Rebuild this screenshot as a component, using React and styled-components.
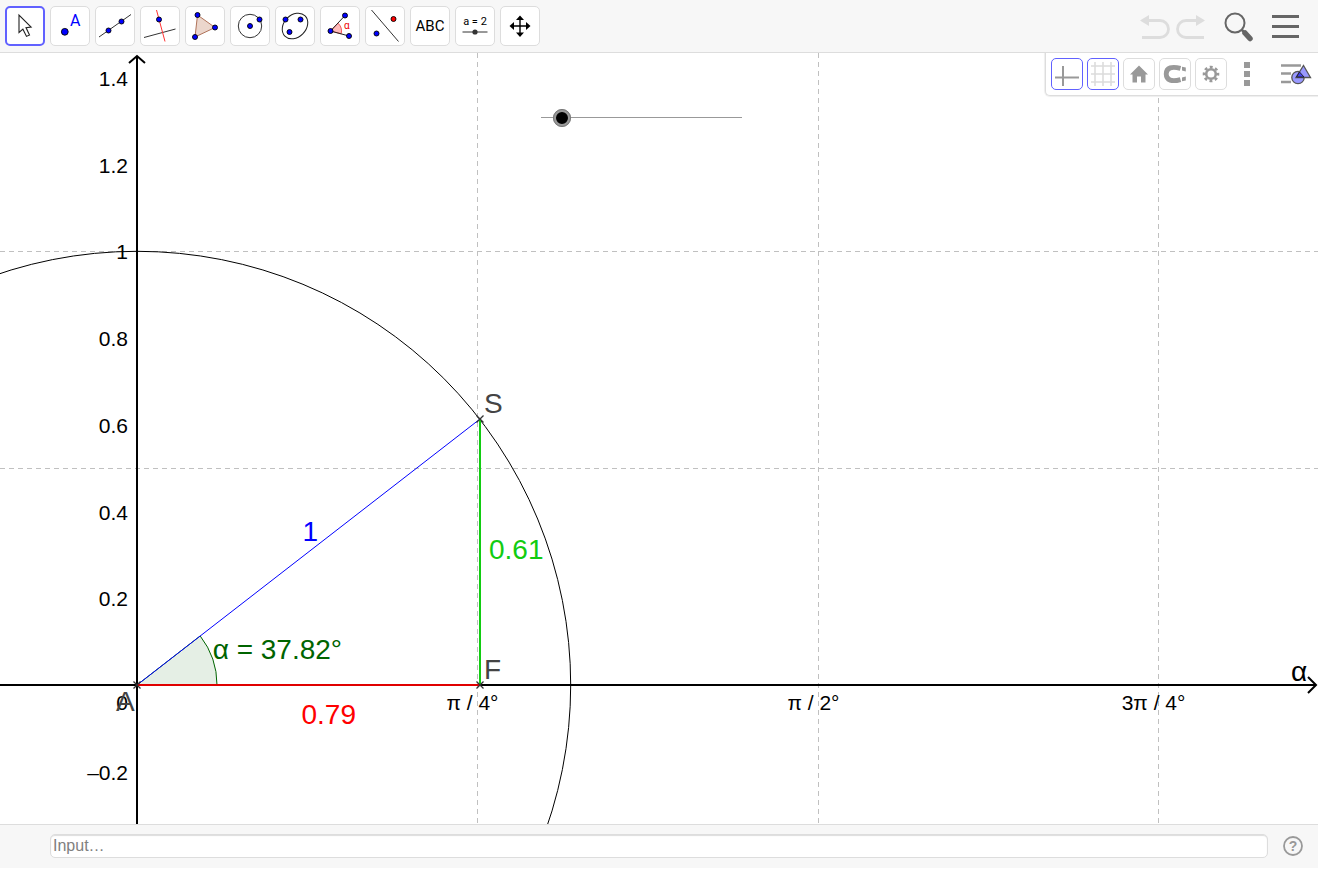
import React, { useLayoutEffect, useRef, useState } from "react";
import styled, { createGlobalStyle, css } from "styled-components";

const GlobalStyle = createGlobalStyle`
    body{
        margin:0;
        background:#fff;
    }
    *{
        box-sizing:border-box;
    }
`

const Page = styled.div`
    display:flex;
    flex-direction:column;
    height:100vh;
    padding:0 2px 1px 0;
    font-family:"Liberation Sans", Arial, sans-serif;
`

const Header = styled.header`
    display:flex;
    justify-content:space-between;
    align-items:center;
    padding:6px 18px 6px 5px;
    background:#f7f7f7;
    border-bottom:1px solid #ddd;
`

const Tools = styled.div`
    display:flex;
    gap:5px;
`

const HeaderActions = styled.div`
    display:flex;
    gap:18px;
`

const History = styled.div`
    display:flex;
    gap:6px;
`

const PlainButton = styled.button`
    display:flex;
    align-items:center;
    justify-content:center;
    padding:0;
    border:none;
    background:none;
    cursor:pointer;

    svg{
        display:block;
    }
`

const ToolButton = styled(PlainButton)`
    width:40px;
    height:40px;
    background:#fff;
    border:1px solid #ddd;
    border-radius:5px;

    ${props => props.$selected && css`
        border:2px solid #6161ff;
    `}

    svg{
        flex:none;
        font-family:Roboto, sans-serif;
    }
`

const Graphics = styled.main`
    position:relative;
    flex:1;
    min-height:0;
    overflow:hidden;
    background:#fff;
`

const Drawing = styled.svg`
    display:block;
    width:100%;
    height:100%;

    .axis{
        stroke:#000;
        stroke-width:2;
        fill:none;
    }

    .grid{
        stroke:#c0c0c0;
        stroke-dasharray:5 4;
    }

    .tick{
        font-size:21px;
    }

    .label{
        font-size:28px;
    }
`

const StyleBar = styled.div`
    position:absolute;
    top:0;
    right:0;
    display:flex;
    gap:4px;
    padding:5px 6px 5px 5px;
    background:#fff;
    border:solid #ddd;
    border-width:0 0 1px 1px;
    border-radius:0 0 0 5px;
    box-shadow:0 0 1px 1px #eee;
`

const StyleButton = styled(PlainButton)`
    width:32px;
    height:32px;
    border:1px solid ${props => props.$active ? "#6161ff" : props.$flat ? "transparent" : "#ddd"};
    border-radius:5px;

    svg{
        flex:none;
    }
`

const ViewButton = styled(StyleButton)`
    margin-left:13px;
`

const AngleSlider = styled.input`
    position:absolute;
    top:55px;
    left:532px;
    width:219px;
    height:19px;
    margin:0;
    appearance:none;
    background:linear-gradient(#999, #999) center/calc(100% - 18px) 1px no-repeat;
    cursor:pointer;

    &::-webkit-slider-thumb{
        appearance:none;
        width:18px;
        height:18px;
        border:3px solid #999;
        outline:1px solid #777;
        outline-offset:-1px;
        border-radius:50%;
        background:#000;
    }
`

const Footer = styled.footer`
    display:flex;
    align-items:center;
    gap:14px;
    height:44px;
    padding:0 14px 2px 50px;
    background:#f7f7f7;
    border-top:1px solid #ddd;
`

const CommandInput = styled.input`
    flex:1;
    min-width:0;
    height:24px;
    padding:0 2px;
    border:1px solid #ddd;
    border-radius:5px;
    background:#fff;
    box-shadow:inset 0 1px 1px #ddd;
    font-family:inherit;
    font-size:16px;

    &::placeholder{
        color:#808080;
    }
`

const Dot = ({ x, y, r = 2.5, fill = "#00f" }) => (
    <circle cx={x} cy={y} r={r} fill={fill} stroke="#000" strokeWidth=".9" />
)

const tools = [
    { name: "Move", icon: (
        <path d="M14 9V26.5L17.9 23.2L21.5 30.4L24.5 29L21 21.6L26.1 21Z" fill="#fff" stroke="#222" strokeWidth="1.1" />
    ) },
    { name: "Point", icon: (
        <>
            <Dot x={14.8} y={25.8} r={3.4} />
            <text x="20" y="20" fontSize="16" fill="#00f">A</text>
        </>
    ) },
    { name: "Line", icon: (
        <>
            <path d="M4 31L36 8.5" stroke="#333" />
            <Dot x={13.5} y={24.5} />
            <Dot x={26.5} y={15.5} />
        </>
    ) },
    { name: "Perpendicular Line", icon: (
        <>
            <path d="M4 31.5L35.5 23" stroke="#333" />
            <path d="M16.5 4L25 35.5" stroke="#f33" />
            <Dot x={19} y={13.5} />
        </>
    ) },
    { name: "Polygon", icon: (
        <>
            <path d="M12.5 9L30 21.5L10 31Z" fill="#ebd6cc" stroke="#b0735a" />
            <Dot x={12.5} y={9} />
            <Dot x={30} y={21.5} />
            <Dot x={10} y={31} />
        </>
    ) },
    { name: "Circle with Center", icon: (
        <>
            <circle cx="20" cy="20" r="11.7" fill="none" stroke="#333" />
            <Dot x={20} y={20} />
            <Dot x={29.5} y={13.5} />
        </>
    ) },
    { name: "Ellipse", icon: (
        <>
            <ellipse cx="20" cy="20" rx="14.3" ry="11" transform="rotate(-45 20 20)" fill="none" stroke="#222" />
            <Dot x={10.5} y={13.5} />
            <Dot x={25.5} y={13.5} />
            <Dot x={14.5} y={26} />
        </>
    ) },
    { name: "Angle", icon: (
        <>
            <path d="M10.5 25L18 17.2A11 11 0 0 1 21.2 27.8Z" fill="#fbb" stroke="#e33" strokeWidth=".8" />
            <path d="M25 9.5L10.5 25L29 30" fill="none" stroke="#222" />
            <text x="24" y="23" fontSize="10" fill="#e00">α</text>
            <Dot x={25} y={9.5} />
            <Dot x={10.5} y={25} />
            <Dot x={29} y={30} />
        </>
    ) },
    { name: "Reflect about Line", icon: (
        <>
            <path d="M6.5 4L33.5 35.5" stroke="#333" />
            <Dot x={11.5} y={27.5} />
            <Dot x={28.5} y={13} fill="#f00" />
        </>
    ) },
    { name: "Text", icon: (
        <text x="20" y="25" fontSize="15" textAnchor="middle">ABC</text>
    ) },
    { name: "Slider", icon: (
        <>
            <text x="20" y="19" fontSize="11" textAnchor="middle">a = 2</text>
            <path d="M7.5 26H32.5" stroke="#333" />
            <circle cx="20" cy="26" r="2.6" fill="#333" />
        </>
    ) },
    { name: "Move Graphics View", icon: (
        <>
            <path d="M20 12V28M12 20H28" stroke="#000" strokeWidth="1.4" />
            <path d="M20 9.5L24 14H16ZM20 31L24 26.5H16ZM9.5 20L14 16V24ZM30.5 20L26 16V24Z" />
        </>
    ) },
]

const styleButtons = [
    { name: "Show axes", active: true, icon: (
        <path d="M4 19.5H28M12 8V28" stroke="#999" strokeWidth="2" />
    ) },
    { name: "Show grid", active: true, icon: (
        <path d="M4 8H28M4 16H28M4 24H28M8 4V28M16 4V28M24 4V28" stroke="#dcdcdc" strokeWidth="1.6" />
    ) },
    { name: "Standard view", icon: (
        <path d="M16 7.5L25 16.5H22.5V24.5H18V18.5H14V24.5H9.5V16.5H7Z" fill="#999" />
    ) },
    { name: "Point capturing", icon: (
        <>
            <path d="M21.5 10.4C13 8 7.2 9.5 7.2 16S13 24 21.5 21.6" fill="none" stroke="#999" strokeWidth="4.8" />
            <path d="M23 8.8L26.8 9.6V13.4L23 12.6ZM23 19.4L26.8 18.6V22.4L23 23.2Z" fill="#999" />
        </>
    ) },
    { name: "Settings", icon: (
        <g stroke="#999" fill="none">
            <circle cx="16" cy="16" r="4.8" strokeWidth="2.6" />
            <circle cx="16" cy="16" r="7" strokeWidth="2.6" strokeDasharray="2.9 2.598" strokeDashoffset="1.45" />
        </g>
    ) },
    { name: "More", flat: true, icon: (
        <path d="M13 4H19V10H13ZM13 13H19V19H13ZM13 22H19V28H13Z" fill="#999" />
    ) },
]

const ORIGIN = { x: 137, y: 632 }
const UNIT = 433.7
const Y_TICKS = [1.4, 1.2, 1, 0.8, 0.6, 0.4, 0.2, -0.2]
const X_TICKS = ["π / 4°", "π / 2°", "3π / 4°"]

function Cross({ x, y }) {
    return <path d={`M${x - 3.5} ${y - 3.5}l7 7m0 -7l-7 7`} stroke="#333" strokeWidth="1.3" />
}

function UnitCircle({ angle }) {
    const ref = useRef(null)
    const [size, setSize] = useState({ width: 1319, height: 771 })

    useLayoutEffect(() => {
        const measure = () => {
            const box = ref.current.getBoundingClientRect()
            setSize({ width: box.width, height: box.height })
        }
        measure()
        window.addEventListener("resize", measure)
        return () => window.removeEventListener("resize", measure)
    }, [])

    const { x, y } = ORIGIN
    const rad = angle * Math.PI / 180
    // whole pixels keep the upright side sharp
    const sx = Math.round(x + UNIT * Math.cos(rad))
    const sy = Math.round(y - UNIT * Math.sin(rad))
    const tip = size.width - 2
    const gridX = i => Math.floor(x + UNIT * i * Math.PI / 4) + 0.5

    return (
        <Drawing ref={ref} role="img" aria-label="Unit circle">
            {X_TICKS.map((label, i) => (
                <line key={label} className="grid" x1={gridX(i + 1)} x2={gridX(i + 1)} y1="0" y2={size.height} />
            ))}
            <line className="grid" x1="0" x2={size.width} y1="198.5" y2="198.5" />
            <line className="grid" x1="0" x2={size.width} y1="415.5" y2="415.5" />

            <path className="axis" d={`M0 ${y}H${tip}M${tip - 8} ${y - 8}l8 8l-8 8`} />
            <path className="axis" d={`M${x} ${size.height}V3M${x - 8} 10l8 -7l8 7`} />
            {Y_TICKS.map(value => (
                <text key={value} className="tick" x="128" y={Math.round(y - value * UNIT) + 8} textAnchor="end">
                    {String(value).replace("-", "–")}
                </text>
            ))}
            <text className="tick" x="128" y={y + 25} textAnchor="end">0</text>
            {X_TICKS.map((label, i) => (
                <text key={label} className="tick" x={gridX(i + 1) - 5} y={y + 25} textAnchor="middle">{label}</text>
            ))}
            <text className="label" x={size.width - 27} y={y - 4}>α</text>

            <path
                d={`M${x} ${y}H${x + 80}A80 80 0 ${angle > 180 ? 1 : 0} 0 ${x + 80 * Math.cos(rad)} ${y - 80 * Math.sin(rad)}Z`}
                fill="#006400"
                fillOpacity=".1"
                stroke="#006400"
            />
            <circle cx={x} cy={y} r={UNIT} fill="none" stroke="#000" />
            <line x1={x} y1={y} x2={sx} y2={sy} stroke="#00f" />
            <line x1={x} y1={y} x2={sx} y2={y} stroke="#e00000" strokeWidth="2" />
            <line x1={sx} y1={y} x2={sx} y2={sy} stroke="#1c1" strokeWidth="2" />
            <Cross x={x} y={y} />
            <Cross x={sx} y={y} />
            <Cross x={sx} y={sy} />

            <g className="label" fill="#444">
                <text x={x - 21} y={y + 26}>A</text>
                <text x={sx + 4} y={y - 6}>F</text>
                <text x={sx + 4} y={sy - 6}>S</text>
            </g>
            <text className="label" x={(x + sx) / 2 - 6} y={(y + sy) / 2 - 11} fill="#00f">1</text>
            <text className="label" x={(x + sx) / 2 - 7} y={y + 39} fill="#f00">{Math.cos(rad).toFixed(2)}</text>
            <text className="label" x={sx + 9} y={(y + sy) / 2 + 7} fill="#1c1">{Math.sin(rad).toFixed(2)}</text>
            <text className="label" x={x + 80 * Math.cos(rad / 2)} y={y - 80 * Math.sin(rad / 2)} fill="#006400">
                {`α = ${angle.toFixed(2)}°`}
            </text>
        </Drawing>
    )
}

export default function App() {
    const [tool, setTool] = useState("Move")
    const [angle, setAngle] = useState(37.82)

    return (
        <Page>
            <GlobalStyle />
            <Header>
                <Tools>
                    {tools.map(({ name, icon }) => (
                        <ToolButton key={name} aria-label={name} $selected={tool === name} onClick={() => setTool(name)}>
                            <svg width="40" height="40">{icon}</svg>
                        </ToolButton>
                    ))}
                </Tools>
                <HeaderActions>
                    <History>
                        <PlainButton aria-label="Undo">
                            <svg width="30" height="40">
                                <path d="M8 14.5H20A8.5 8.5 0 0 1 20 31.5H2" fill="none" stroke="#ddd" strokeWidth="2.8" />
                                <path d="M0 14.5L9 9V20Z" fill="#ddd" />
                            </svg>
                        </PlainButton>
                        <PlainButton aria-label="Redo">
                            <svg width="30" height="40">
                                <path d="M21 14.5H10A8.5 8.5 0 0 0 10 31.5H28" fill="none" stroke="#ddd" strokeWidth="2.8" />
                                <path d="M29 14.5L20 9V20Z" fill="#ddd" />
                            </svg>
                        </PlainButton>
                    </History>
                    <PlainButton aria-label="Search">
                        <svg width="30" height="40">
                            <circle cx="11" cy="17" r="9.5" fill="none" stroke="#666" strokeWidth="2" />
                            <path d="M17.5 23.5L21 27" stroke="#666" strokeWidth="2.5" />
                            <path d="M21 27L26 32.5" stroke="#666" strokeWidth="5.5" strokeLinecap="round" />
                        </svg>
                    </PlainButton>
                    <PlainButton aria-label="Menu">
                        <svg width="28" height="40">
                            <path d="M0 10.5H27M0 20.5H27M0 30.5H27" stroke="#666" strokeWidth="3" />
                        </svg>
                    </PlainButton>
                </HeaderActions>
            </Header>

            <Graphics>
                <UnitCircle angle={angle} />
                <AngleSlider
                    type="range"
                    aria-label="Angle"
                    min="0"
                    max="360"
                    step="0.01"
                    value={angle}
                    onChange={e => setAngle(Number(e.target.value))}
                />
                <StyleBar>
                    {styleButtons.map(({ name, icon, active, flat }) => (
                        <StyleButton key={name} aria-label={name} $active={active} $flat={flat}>
                            <svg width="32" height="32">{icon}</svg>
                        </StyleButton>
                    ))}
                    <ViewButton aria-label="Views" $flat>
                        <svg width="32" height="32">
                            <path d="M1 7.5H21M1 15.5H11M1 24H11" stroke="#999" strokeWidth="2.4" />
                            <circle cx="18" cy="19.5" r="6.2" fill="#99f" stroke="#555" strokeWidth="1.3" />
                            <path d="M23.5 7.5L30.5 19.5H16Z" fill="#99f" stroke="#555" strokeWidth="1.3" />
                            <path d="M19.5 14L24 19H16.5Z" fill="#44e" stroke="#223" strokeWidth="1" />
                        </svg>
                    </ViewButton>
                </StyleBar>
            </Graphics>

            <Footer>
                <CommandInput aria-label="Input" placeholder="Input…" />
                <PlainButton aria-label="Help">
                    <svg width="22" height="22">
                        <circle cx="11" cy="11" r="9" fill="none" stroke="#999" strokeWidth="1.8" />
                        <text x="11" y="16" fontSize="14" fontWeight="bold" textAnchor="middle" fill="#999">?</text>
                    </svg>
                </PlainButton>
            </Footer>
        </Page>
    )
}
